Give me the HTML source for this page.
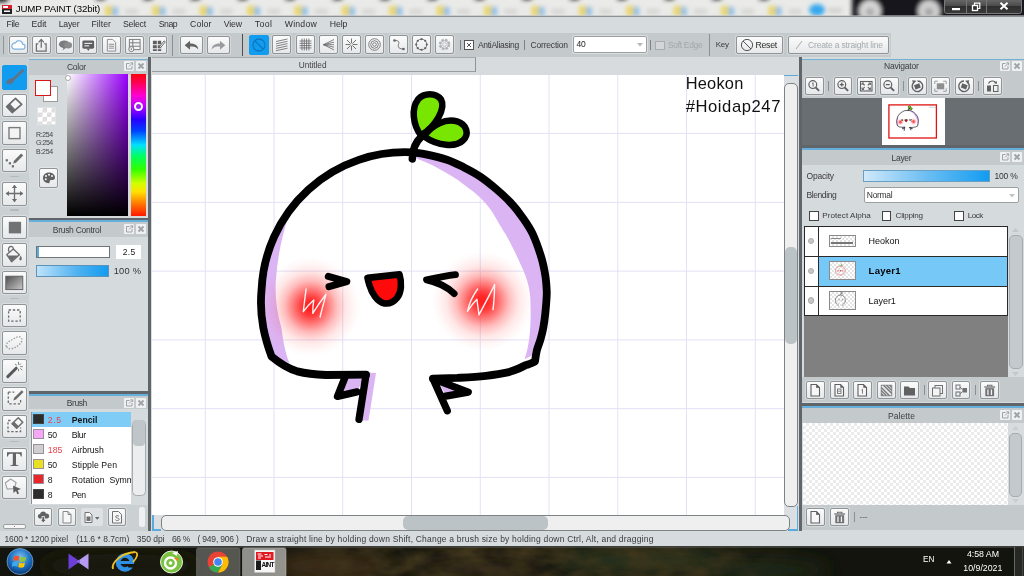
<!DOCTYPE html>
<html>
<head>
<meta charset="utf-8">
<title>JUMP PAINT</title>
<style>
*{box-sizing:border-box;margin:0;padding:0}
html,body{width:1024px;height:576px;overflow:hidden;background:#d6dbde;font-family:"Liberation Sans",sans-serif;font-size:9px;color:#3a3a3a}
#root{position:absolute;left:0;top:0;width:1024px;height:576px;overflow:hidden;will-change:transform}
.a{position:absolute}
.t{position:absolute;white-space:nowrap;line-height:1}
.b{position:absolute;border:1px solid #8f9497;border-radius:2px;background:linear-gradient(#fbfbfb,#e6e8e9);box-shadow:0 0 0 1px rgba(255,255,255,.3)}
.b svg{position:absolute;left:-1px;top:-1px;width:calc(100% + 2px);height:calc(100% + 2px)}
.sel{background:#129cf0;border-color:#129cf0;box-shadow:none}
.cb{position:absolute;width:10px;height:10px;border:1px solid #555;background:#fff}
svg{display:block}
</style>
</head>
<body>
<div id="root">
<div class="a" style="left:0;top:0;width:1024px;height:17px;background:#e9e9e7;overflow:hidden">
<svg class="a" style="left:0;top:0" width="1024" height="17" viewBox="0 0 1024 17">
<defs>
<filter id="bl" x="-5%" y="-50%" width="110%" height="200%"><feGaussianBlur stdDeviation="2.2"/></filter>
<pattern id="ic" x="94" y="0" width="47.400" height="21" patternUnits="userSpaceOnUse">
<rect x="11" y="6" width="9" height="10" fill="#ead568"/>
<rect x="18" y="7" width="6" height="9" fill="#93c0e6"/>
<rect x="31" y="9" width="13" height="5" fill="#d4d4d2"/>
<ellipse cx="6.500" cy="20" rx="5" ry="3.200" fill="#2a2a2a"/>
</pattern>
<linearGradient id="wb" x1="0" y1="0" x2="0" y2="1"><stop offset="0" stop-color="#6a6a6a"/><stop offset=".5" stop-color="#4a4a4a"/><stop offset=".5" stop-color="#2e2e2e"/><stop offset="1" stop-color="#3a3a3a"/></linearGradient>
</defs>
<rect x="0" y="0" width="1024" height="17" fill="#eaeae8"/>
<g filter="url(#bl)">
<ellipse cx="1" cy="-1" rx="8" ry="3.500" fill="#222"/>
<rect x="94" y="-4" width="711" height="21" fill="url(#ic)"/>
<ellipse cx="817" cy="10" rx="8" ry="6" fill="#38a8ee"/>
<rect x="828" y="8" width="14" height="5" fill="#d0d0ce"/>
<rect x="852" y="-6" width="180" height="30" fill="#14161b"/>
<circle cx="870" cy="11" r="11" fill="#d6d6d6"/><circle cx="870" cy="12" r="4" fill="#a8a8a8"/>
<circle cx="929" cy="11" r="11" fill="#d0d0d0"/><circle cx="929" cy="12" r="4" fill="#a0a0a0"/>
</g>
<rect x="0" y="16" width="1024" height="1" fill="#8e9194"/>
<rect x="0" y="15" width="1024" height="1" fill="#b9bcbe" opacity=".6"/>
<rect x="944.5" y="-1" width="77" height="14.5" rx="2" fill="url(#wb)" stroke="#7a7a7a" stroke-width="1"/>
<rect x="966" y="0" width="1" height="13" fill="#777"/><rect x="986" y="0" width="1" height="13" fill="#777"/>
<rect x="952" y="8" width="8" height="2.2" fill="#fff"/>
<rect x="972.5" y="5.500" width="5" height="5" fill="none" stroke="#fff" stroke-width="1.3"/><path d="M974.5 5V3.2h5.3v5.3H978" fill="none" stroke="#fff" stroke-width="1.2"/>
<path d="M1000.5 2.800l7 6.400M1007.500 2.800l-7 6.400" stroke="#fff" stroke-width="2"/>
<rect x="2" y="5" width="10" height="9" fill="#d8202a"/><rect x="2" y="9" width="10" height="5" fill="#222"/><rect x="3" y="6" width="5" height="2" fill="#fff"/><rect x="4" y="10.500" width="6" height="1.500" fill="#fff"/>
</svg>
<div class="t" style="left:15.80px;top:3.89px;font-size:9.7px;color:#000;letter-spacing:-0.131px;">JUMP PAINT (32bit)</div></div>
<div class="a" style="left:0;top:17px;width:1024px;height:16px;background:#d6dbde"><div class="t" style="left:6.50px;top:3.24px;font-size:8.7px;color:#303030;letter-spacing:-0.320px;">File</div><div class="t" style="left:31.50px;top:3.24px;font-size:8.7px;color:#303030;letter-spacing:0.002px;">Edit</div><div class="t" style="left:58.75px;top:3.24px;font-size:8.7px;color:#303030;letter-spacing:-0.225px;">Layer</div><div class="t" style="left:91.50px;top:3.24px;font-size:8.7px;color:#303030;letter-spacing:0.030px;">Filter</div><div class="t" style="left:123.00px;top:3.24px;font-size:8.7px;color:#303030;letter-spacing:-0.215px;">Select</div><div class="t" style="left:158.75px;top:3.24px;font-size:8.7px;color:#303030;letter-spacing:-0.448px;">Snap</div><div class="t" style="left:190.00px;top:3.24px;font-size:8.7px;color:#303030;letter-spacing:0.158px;">Color</div><div class="t" style="left:223.75px;top:3.24px;font-size:8.7px;color:#303030;letter-spacing:-0.129px;">View</div><div class="t" style="left:254.75px;top:3.24px;font-size:8.7px;color:#303030;letter-spacing:0.440px;">Tool</div><div class="t" style="left:284.75px;top:3.24px;font-size:8.7px;color:#303030;letter-spacing:0.219px;">Window</div><div class="t" style="left:329.75px;top:3.24px;font-size:8.7px;color:#303030;letter-spacing:-0.112px;">Help</div></div>
<div class="a" style="left:0;top:33px;width:891px;height:24px;background:#c4c9cc"><div class="a" style="left:3px;top:3px;width:1px;height:18px;background:#8f9598;"></div><div class="b " style="left:9px;top:2.5px;width:18.5px;height:18.5px"><svg viewBox="0 0 19 19"><path d="M5.500 13.500h8.200a2.600 2.600 0 0 0 .3-5.200a3.800 3.800 0 0 0-7.300-1.100a3.200 3.200 0 0 0-1.200 6.300z" fill="#fff" stroke="#7fb2e0" stroke-width="1.200"/></svg></div><div class="b " style="left:32.25px;top:2.5px;width:18.5px;height:18.5px"><svg viewBox="0 0 19 19"><path d="M6.500 8h-2v7.500h10v-7.500h-2" fill="none" stroke="#6d6f71" stroke-width="1.300"/><path d="M9.500 12V4M6.800 6.500l2.700-3l2.700 3" fill="none" stroke="#6d6f71" stroke-width="1.300"/></svg></div><div class="b " style="left:55.5px;top:2.5px;width:18.5px;height:18.5px"><svg viewBox="0 0 19 19"><ellipse cx="8.500" cy="8.500" rx="5.500" ry="4" fill="#7a7c7e"/><ellipse cx="12.500" cy="9.500" rx="4" ry="3.300" fill="#8a8c8e"/><path d="M8 11.500l-1.500 3.500l4-3z" fill="#7a7c7e"/></svg></div><div class="b " style="left:78.75px;top:2.5px;width:18.5px;height:18.5px"><svg viewBox="0 0 19 19"><rect x="3.500" y="4.500" width="12" height="8.500" rx="1.500" fill="#5c5e60"/><path d="M8 13l1.500 2.500l1.500-2.500z" fill="#5c5e60"/><rect x="5.500" y="7" width="8" height="1.200" fill="#e8e8e8"/><rect x="5.500" y="9.500" width="5" height="1.200" fill="#e8e8e8"/></svg></div><div class="b " style="left:102px;top:2.5px;width:18.5px;height:18.5px"><svg viewBox="0 0 19 19"><path d="M5.500 3.500h5.500l3 3v9h-8.500z" fill="#f4f4f4" stroke="#8b8d8f" stroke-width="1"/><path d="M7 8.500h5.500M7 10.500h5.500M7 12.500h5.500" stroke="#8b8d8f" stroke-width="1"/></svg></div><div class="b " style="left:125.25px;top:2.5px;width:18.5px;height:18.5px"><svg viewBox="0 0 19 19"><rect x="4.500" y="3.500" width="11" height="10.500" fill="#f4f4f4" stroke="#7a7c7e" stroke-width="1"/><path d="M4.500 7h11M4.500 10.500h11M8 3.500v10.500" stroke="#7a7c7e" stroke-width="1"/><circle cx="6.500" cy="13.500" r="2.600" fill="#f4f4f4" stroke="#7a7c7e" stroke-width="1"/><circle cx="6.500" cy="13.500" r=".8" fill="#7a7c7e"/></svg></div><div class="b " style="left:148.5px;top:2.5px;width:18.5px;height:18.5px"><svg viewBox="0 0 19 19"><path d="M4 5h4v3.500h-4zM9 5h3.500v3.500h-3.500zM4 9.500h4v3h-4zM9 9.500h3.500v3h-3.500zM4 13.500h4v2h-4zM9 13.500h3.500v2h-3.500z" fill="#5c5e60"/><path d="M11 10.500l4.500-5.500l1.300 1l-4.500 5.500l-1.800.6z" fill="#f4f4f4" stroke="#5c5e60" stroke-width=".9"/></svg></div><div class="a" style="left:172px;top:1.5px;width:1px;height:21px;background:#8a8f92;"></div><div class="b " style="left:179.5px;top:2.5px;width:23px;height:18.5px"><svg viewBox="0 0 23 19"><path d="M4.500 9.500l5.500-4.500v2.800c4.500 0 8 1.500 8.500 6c-1.800-2.500-4.500-3-8.500-3v3.200z" fill="#606264"/></svg></div><div class="b " style="left:207px;top:2.5px;width:23px;height:18.5px"><svg viewBox="0 0 23 19"><path d="M18.500 9.500l-5.500-4.500v2.800c-4.500 0-8 1.500-8.500 6c1.800-2.500 4.500-3 8.500-3v3.200z" fill="#9a9c9e"/></svg></div><div class="a" style="left:242px;top:1px;width:1.2px;height:22px;background:#4a4e51;"></div><div class="b sel" style="left:248.75px;top:1.5px;width:20px;height:20px"><svg viewBox="0 0 20 20"><circle cx="10" cy="10" r="6" fill="none" stroke="#0c78c2" stroke-width="1.300"/><path d="M5.800 5.800l8.400 8.400" stroke="#0c78c2" stroke-width="1.300"/></svg></div><div class="b " style="left:272.25px;top:2px;width:19px;height:19px"><svg viewBox="0 0 19 19"><path d="M4 6.500l11.500-2.500M4 8.800l11.500-2.500M4 11.100l11.500-2.500M4 13.400l11.500-2.500M4 15.700l11.500-2.500" stroke="#636567" stroke-width=".8"/></svg></div><div class="b " style="left:295.5px;top:2px;width:19px;height:19px"><svg viewBox="0 0 19 19"><path d="M3.500 6h12M3.500 8.300h12M3.500 10.600h12M3.500 12.900h12M6 3.500v12M8.300 3.500v12M10.600 3.500v12M12.900 3.500v12" stroke="#636567" stroke-width=".8"/></svg></div><div class="b " style="left:318.75px;top:2px;width:19px;height:19px"><svg viewBox="0 0 19 19"><path d="M4.500 9.700l10.500-5.200M4.500 9.700l10.500-2.500M4.500 9.700h10.500M4.500 9.700l10.500 2.500M4.500 9.700l10.500 5.200" stroke="#636567" stroke-width=".8"/></svg></div><div class="b " style="left:342px;top:2px;width:19px;height:19px"><svg viewBox="0 0 19 19"><path d="M9.500 3.500v12M3.500 9.500h12M5 5l9 9M14 5l-9 9" stroke="#636567" stroke-width=".9"/><circle cx="9.500" cy="9.500" r="1.300" fill="#f4f4f4"/></svg></div><div class="b " style="left:365.25px;top:2px;width:19px;height:19px"><svg viewBox="0 0 19 19"><circle cx="9.500" cy="9.500" r="5.800" fill="none" stroke="#636567" stroke-width=".8"/><circle cx="9.500" cy="9.500" r="3.800" fill="none" stroke="#636567" stroke-width=".8"/><circle cx="9.500" cy="9.500" r="1.800" fill="none" stroke="#636567" stroke-width=".8"/></svg></div><div class="b " style="left:388.5px;top:2px;width:19px;height:19px"><svg viewBox="0 0 19 19"><path d="M5.500 5.500c4 0 5 1 4 4s1 4.500 5 4.500" fill="none" stroke="#636567" stroke-width=".9"/><circle cx="5.500" cy="5.500" r="1.300" fill="#636567"/><circle cx="14.500" cy="14" r="1.300" fill="#636567"/></svg></div><div class="b " style="left:411.75px;top:2px;width:19px;height:19px"><svg viewBox="0 0 19 19"><circle cx="9.500" cy="9.500" r="5.300" fill="none" stroke="#636567" stroke-width=".9"/><g fill="#636567"><circle cx="9.500" cy="4.200" r="1.100"/><circle cx="9.500" cy="14.800" r="1.100"/><circle cx="4.200" cy="9.500" r="1.100"/><circle cx="14.800" cy="9.500" r="1.100"/><circle cx="5.800" cy="5.800" r="1.100"/><circle cx="13.200" cy="5.800" r="1.100"/><circle cx="5.800" cy="13.200" r="1.100"/><circle cx="13.200" cy="13.200" r="1.100"/></g></svg></div><div class="b " style="left:435px;top:2px;width:19px;height:19px"><svg viewBox="0 0 19 19"><circle cx="9.500" cy="9.500" r="4.600" fill="none" stroke="#b0b3b5" stroke-width="2.200" stroke-dasharray="2.400 1.210"/><circle cx="9.500" cy="9.500" r="3.800" fill="none" stroke="#b0b3b5" stroke-width=".9"/><circle cx="9.500" cy="9.500" r="1.900" fill="none" stroke="#b0b3b5" stroke-width=".8"/></svg></div><div class="a" style="left:459.5px;top:7px;width:1px;height:10px;background:#7d8387;"></div><div class="cb" style="left:464px;top:7px"><svg viewBox="0 0 8 8" width="8" height="8"><path d="M2 2l4 4M6 2l-4 4" stroke="#555" stroke-width="1"/></svg></div><div class="t" style="left:478.00px;top:7.80px;font-size:8.5px;color:#3a3a3a;letter-spacing:-0.297px;">AntiAliasing</div><div class="a" style="left:524px;top:7px;width:1px;height:10px;background:#7d8387;"></div><div class="t" style="left:530.50px;top:7.80px;font-size:8.5px;color:#3a3a3a;letter-spacing:-0.180px;">Correction</div><div class="a" style="left:572.5px;top:3px;width:74px;height:16.500px;background:#fff;border:1px solid #9a9fa2;border-radius:2px;box-shadow:0 0 0 1px rgba(255,255,255,.4)"></div><div class="t" style="left:576.50px;top:7.30px;font-size:8.5px;color:#222;letter-spacing:-0.303px;">40</div><svg class="a" style="left:637px;top:10px" width="6" height="4" viewBox="0 0 6 4"><path d="M0 0h6l-3 3.500z" fill="#b5b9bc"/></svg><div class="a" style="left:649.5px;top:7px;width:1px;height:10px;background:#7d8387;"></div><div class="cb" style="left:655px;top:7.500px;width:9.500px;height:9.500px;border-color:#a8acaf;background:#d2d6d9"></div><div class="t" style="left:668.00px;top:7.80px;font-size:8.5px;color:#a3a8ab;letter-spacing:-0.333px;">Soft Edge</div><div class="a" style="left:708.5px;top:1px;width:1px;height:22px;background:#8a8f92;"></div><div class="t" style="left:715.75px;top:8.23px;font-size:8px;color:#3a3a3a;letter-spacing:-0.214px;">Key</div><div class="b " style="left:735.5px;top:2.5px;width:47px;height:18px"><svg viewBox="0 0 47 18"><circle cx="11" cy="9" r="5.600" fill="none" stroke="#555" stroke-width="1"/><path d="M7 5l8 8" stroke="#555" stroke-width="1"/></svg></div><div class="t" style="left:755.50px;top:7.85px;font-size:8.8px;color:#2a2a2a;letter-spacing:-0.331px;">Reset</div><div class="b " style="left:787.5px;top:2.5px;width:101.5px;height:18px"><svg viewBox="0 0 101.5 18"><path d="M8 13l6-8" stroke="#a5aaad" stroke-width="1"/></svg></div><div class="t" style="left:808.00px;top:7.80px;font-size:8.5px;color:#a5aaad;letter-spacing:-0.160px;">Create a straight line</div></div>
<div class="a" style="left:0;top:57px;width:29px;height:474px;background:#cbd0d3"><div class="b sel" style="left:2px;top:8px;width:25.2px;height:25px"><svg viewBox="0 0 25.2 25"><path d="M20.800 5.500L10.500 15" stroke="#5f7486" stroke-width="2.800" stroke-linecap="round"/><ellipse cx="8.300" cy="16.200" rx="4.200" ry="2.500" transform="rotate(-28 8.300 16.200)" fill="#5f7486"/></svg></div><div class="b " style="left:2px;top:36.5px;width:25.2px;height:23.5px"><svg viewBox="0 0 25.2 23.5"><path d="M13.500 4.300L19.700 10.400L10.200 18.500L4.700 12.600Z" fill="#f6f6f6" stroke="#6a6c6e" stroke-width="1.700" stroke-linejoin="round"/><path d="M4.700 12.600L7.600 9.900L13.300 15.900L10.200 18.500Z" fill="#6a6c6e" stroke="#6a6c6e" stroke-width="1" stroke-linejoin="round"/></svg></div><div class="b " style="left:2px;top:64px;width:25.2px;height:23.5px"><svg viewBox="0 0 25.2 23.5"><rect x="7" y="6.600" width="11" height="11" fill="#f4f4f4" stroke="#7a7c7e" stroke-width="1.400"/></svg></div><div class="b " style="left:2px;top:91.5px;width:25.2px;height:23.5px"><svg viewBox="0 0 25.2 23.5"><path d="M19.200 4.600l2 2l-7.200 7.200l-2.800.8l.8-2.800z" fill="#6a6c6e"/><g fill="#6a6c6e"><rect x="3.700" y="10.200" width="2.200" height="2.200"/><rect x="6.800" y="13.200" width="2.200" height="2.200"/><rect x="9.800" y="16.200" width="2.200" height="2.200"/></g></svg></div><div class="b " style="left:2px;top:125px;width:25.2px;height:23.5px"><svg viewBox="0 0 25.2 23.5"><path d="M12.500 3.500v16M4.500 11.500h16" stroke="#6a6c6e" stroke-width="1.300"/><path d="M12.500 2.700l2.600 3.300h-5.200zM12.500 20.300l2.600-3.300h-5.200zM3.700 11.500l3.300-2.600v5.200zM21.300 11.500l-3.300-2.600v5.200z" fill="#6a6c6e"/></svg></div><div class="b " style="left:2px;top:158.5px;width:25.2px;height:23.5px"><svg viewBox="0 0 25.2 23.5"><rect x="6.800" y="5.800" width="12.300" height="11.600" fill="#707274"/></svg></div><div class="b " style="left:2px;top:186px;width:25.2px;height:23.5px"><svg viewBox="0 0 25.2 23.5"><path d="M4.700 11.700L11.300 6.100L17.400 11.700L9.700 18.900Z" fill="#f4f4f4" stroke="#6a6c6e" stroke-width="1.300" stroke-linejoin="round"/><path d="M5.500 12.600L16.200 12.600L9.700 18.600Z" fill="#6a6c6e"/><path d="M7.200 8.800c-1.500-2.500-.5-5 1.400-5.300s3.200 1.500 2.900 3.400" fill="none" stroke="#6a6c6e" stroke-width="1.300"/><path d="M18.600 12.500c1.300 2.200 1.600 3.800.7 4.600s-2.200 0-1.900-1.600z" fill="#6a6c6e"/></svg></div><div class="b " style="left:2px;top:213.5px;width:25.2px;height:23.5px"><svg viewBox="0 0 25.2 23.5"><defs><linearGradient id="gg" x1="0" y1="0" x2="1" y2=".9"><stop offset="0" stop-color="#4f4f4f"/><stop offset="1" stop-color="#c4c4c4"/></linearGradient></defs><rect x="3.800" y="5.200" width="17" height="13.400" fill="url(#gg)" stroke="#5a5c5e" stroke-width=".9"/></svg></div><div class="b " style="left:2px;top:246.5px;width:25.2px;height:23.5px"><svg viewBox="0 0 25.2 23.5"><rect x="6.600" y="6" width="11.600" height="11.200" fill="none" stroke="#6a6c6e" stroke-width="1.300" stroke-dasharray="2.400 1.800"/></svg></div><div class="b " style="left:2px;top:274px;width:25.2px;height:23.5px"><svg viewBox="0 0 25.2 23.5"><path d="M4.500 15.500c-1.500-2.500 2-5 5-6.500s6.500-4.500 9-2.800s1.500 5-1 7.200s-4.500 3.500-7.500 4.200s-4.500-.5-5.500-2.100z" fill="none" stroke="#9a9c9e" stroke-width="1.400" stroke-dasharray="1.400 1.500"/></svg></div><div class="b " style="left:2px;top:302px;width:25.2px;height:23.5px"><svg viewBox="0 0 25.2 23.5"><path d="M5.800 17.600L14.200 9.200" stroke="#58595b" stroke-width="3" stroke-linecap="round"/><path d="M16.500 2.800v3M16.500 9.800v2.500M20.800 7.600h-2.600M18.800 4.500l-1.300 1.500M20.300 11l-2-1.500M13 5l1.800 1.300" stroke="#7f8183" stroke-width="1"/></svg></div><div class="b " style="left:2px;top:330px;width:25.2px;height:23.5px"><svg viewBox="0 0 25.2 23.5"><path d="M6.300 5.200h6M6.300 5.200v11.600h12.300v-4.500" fill="none" stroke="#6a6c6e" stroke-width="1.300" stroke-dasharray="2.400 1.800"/><path d="M19.800 3.200l1.800 1.800l-7.600 7.600l-2.700.9l.9-2.700z" fill="#6a6c6e"/></svg></div><div class="b " style="left:2px;top:357.5px;width:25.2px;height:23.5px"><svg viewBox="0 0 25.2 23.5"><path d="M8.500 5.500h-2.500v11.100h12.600v-4" fill="none" stroke="#6a6c6e" stroke-width="1.300" stroke-dasharray="2.400 1.800"/><path d="M16.300 2.700L20.800 7.200L14.700 13.300L10 8.800Z" fill="#f6f6f6" stroke="#6a6c6e" stroke-width="1.500" stroke-linejoin="round"/><path d="M10 8.800L12 6.900L16.600 11.400L14.700 13.300Z" fill="#6a6c6e" stroke="#6a6c6e" stroke-width=".8" stroke-linejoin="round"/></svg></div><div class="b " style="left:2px;top:390.5px;width:25.2px;height:23.5px"><svg viewBox="0 0 25.2 23.5"><path d="M5 4.200h14.800v4.200h-1c-.4-2-1-2.700-2.800-2.700h-2v10c0 1.200.6 1.500 2.400 1.600v.8h-8v-.8c1.800-.1 2.400-.4 2.400-1.600v-10h-2c-1.800 0-2.400.7-2.800 2.700h-1z" fill="#626466"/></svg></div><div class="b " style="left:2px;top:418.5px;width:25.2px;height:23.5px"><svg viewBox="0 0 25.2 23.5"><path d="M8.600 3.100L14.100 6.400L12.400 12.500L5.200 13.100L3.300 6.900Z" fill="#f6f6f6" stroke="#a0a2a4" stroke-width="1.200" stroke-linejoin="round"/><path d="M11 9.800L19 13l-3.300 1.200l1.300 3.300l-1.700.7l-1.300-3.300l-2.500 2z" fill="#5c5e60"/></svg></div><div class="a" style="left:10px;top:118.5px;width:9px;height:1.5px;background:#b4b9bc;border-radius:1px"></div><div class="a" style="left:10px;top:152.0px;width:9px;height:1.5px;background:#b4b9bc;border-radius:1px"></div><div class="a" style="left:10px;top:240.5px;width:9px;height:1.5px;background:#b4b9bc;border-radius:1px"></div><div class="a" style="left:10px;top:383.5px;width:9px;height:1.5px;background:#b4b9bc;border-radius:1px"></div><div class="a" style="left:2.500px;top:467.20000000000005px;width:23px;height:4.800px;background:#f6f6f6;border:1px solid #9a9fa2;border-radius:2px"></div><div class="a" style="left:13.5px;top:469px;width:1.2px;height:1.2px;background:#888;"></div></div>
<div class="a" style="left:0;top:0;width:0;height:0"><div class="a" style="left:29px;top:57px;width:119px;height:474px;background:#d5dadd;"></div><div class="a" style="left:29px;top:58.8px;width:119px;height:1.5px;background:#72b2d9;"></div><div class="a" style="left:29px;top:60.3px;width:119px;height:14.5px;background:#c4c9cc;"></div><div class="t" style="left:67.00px;top:62.50px;font-size:8.5px;color:#3a3e41;letter-spacing:-0.292px;">Color</div><svg class="a" style="left:124px;top:61.199999999999996px" width="22" height="10" viewBox="0 0 22 10"><rect x="0" y="0" width="10" height="10" rx="1" fill="#eef0f1"/><rect x="12" y="0" width="10" height="10" rx="1" fill="#eef0f1"/><path d="M5.500 2.500h-3v5.500h5.500v-3" fill="none" stroke="#9ea3a6" stroke-width="1"/><path d="M5 5.500l3.500-3.500M6.300 1.800h2.400v2.400" fill="none" stroke="#9ea3a6" stroke-width="1"/><path d="M14.500 2.500l5 5M19.500 2.500l-5 5" stroke="#9ea3a6" stroke-width="1.800"/></svg><div class="a" style="left:66.800px;top:74.400px;width:61.200px;height:141.400px;background:linear-gradient(to bottom,rgba(0,0,0,0),#000),linear-gradient(to right,#fff,#9a00ff)"></div>
<div class="a" style="left:131px;top:74.400px;width:15px;height:141.400px;background:linear-gradient(to bottom,#ff0010 0%,#ff0050 6%,#ff00d0 15%,#c000ff 22%,#2800ff 32%,#0040ff 40%,#00e0ff 50%,#00ff60 58%,#30ff00 67%,#d0ff00 77%,#ffe000 83%,#ff7000 92%,#ff1800 100%)"></div>
<div class="a" style="left:134px;top:101.800px;width:9px;height:9px;border-radius:50%;border:2px solid #fff;background:#a020f0"></div>
<div class="a" style="left:64.800px;top:74.500px;width:6px;height:6px;border-radius:50%;background:#fff;border:.5px solid #aaa"></div>
<div class="a" style="left:42.500px;top:86px;width:15.500px;height:15.500px;background:#fefefe;border:1px solid #9a9a9a"></div>
<div class="a" style="left:35px;top:79.500px;width:16px;height:16px;background:#fefefe;border:1.500px solid #d81818"></div>
<div class="a" style="left:37px;top:107px;width:18.500px;height:18px;background:#fff;border:1px solid #e3e3e3;background-image:linear-gradient(45deg,#dcdcdc 25%,transparent 25%,transparent 75%,#dcdcdc 75%),linear-gradient(45deg,#dcdcdc 25%,transparent 25%,transparent 75%,#dcdcdc 75%);background-size:9px 9px;background-position:0 0,4.500px 4.500px"></div>
<div class="t" style="left:36.00px;top:131.07px;font-size:7px;color:#444;letter-spacing:-0.373px;">R:254</div><div class="t" style="left:36.00px;top:139.37px;font-size:7px;color:#444;letter-spacing:-0.460px;">G:254</div><div class="t" style="left:36.00px;top:147.67px;font-size:7px;color:#444;letter-spacing:-0.287px;">B:254</div><div class="b " style="left:38.5px;top:168px;width:19.5px;height:19.5px"><svg viewBox="0 0 19.5 19.5"><path d="M10 4.500c-3.500 0-6 2.400-6 5.500s2.500 5.200 5.500 5.200c1.200 0 1.500-.8 1.200-1.600s.3-1.700 1.500-1.700h1.500c1.500 0 2.300-1 2.300-2.400c0-2.800-2.600-5-6-5z" fill="#5f6163"/><g fill="#f4f4f4"><circle cx="7" cy="8" r="1"/><circle cx="10" cy="6.800" r="1"/><circle cx="13" cy="8" r="1"/><circle cx="6.800" cy="11.300" r="1"/></g></svg></div><div class="a" style="left:29px;top:217.5px;width:119px;height:2.5px;background:#5f6569;"></div><div class="a" style="left:29px;top:220.0px;width:119px;height:2px;background:#66afdc;"></div><div class="a" style="left:29px;top:222.0px;width:119px;height:14.5px;background:#c4c9cc;"></div><div class="t" style="left:52.75px;top:225.80px;font-size:8.5px;color:#3a3e41;letter-spacing:-0.278px;">Brush Control</div><svg class="a" style="left:124px;top:224.0px" width="22" height="10" viewBox="0 0 22 10"><rect x="0" y="0" width="10" height="10" rx="1" fill="#eef0f1"/><rect x="12" y="0" width="10" height="10" rx="1" fill="#eef0f1"/><path d="M5.500 2.500h-3v5.500h5.500v-3" fill="none" stroke="#9ea3a6" stroke-width="1"/><path d="M5 5.500l3.500-3.500M6.300 1.800h2.400v2.400" fill="none" stroke="#9ea3a6" stroke-width="1"/><path d="M14.500 2.500l5 5M19.500 2.500l-5 5" stroke="#9ea3a6" stroke-width="1.800"/></svg><div class="a" style="left:36px;top:246.250px;width:74px;height:11.500px;background:#fff;border:1px solid #6f7477"></div>
<div class="a" style="left:37px;top:247.250px;width:1.500px;height:9.500px;background:#5aaade"></div>
<div class="a" style="left:116px;top:245px;width:24.500px;height:14px;background:#fff"></div>
<div class="a" style="left:36px;top:265px;width:72.800px;height:12px;background:linear-gradient(to right,#bfe3f9,#52b3f0 55%,#129cf0);border:1px solid #5d93b8"></div>
<div class="t" style="left:122.75px;top:248.05px;font-size:8.5px;color:#222;letter-spacing:0.273px;">2.5</div><div class="t" style="left:113.75px;top:266.83px;font-size:9.3px;color:#333;letter-spacing:0.196px;">100 %</div><div class="a" style="left:29px;top:391px;width:119px;height:2.5px;background:#5f6569;"></div><div class="a" style="left:29px;top:393.5px;width:119px;height:2px;background:#66afdc;"></div><div class="a" style="left:29px;top:395.5px;width:119px;height:13.5px;background:#c4c9cc;"></div><div class="t" style="left:66.75px;top:399.30px;font-size:8.5px;color:#3a3e41;letter-spacing:-0.412px;">Brush</div><svg class="a" style="left:124px;top:397.5px" width="22" height="10" viewBox="0 0 22 10"><rect x="0" y="0" width="10" height="10" rx="1" fill="#eef0f1"/><rect x="12" y="0" width="10" height="10" rx="1" fill="#eef0f1"/><path d="M5.500 2.500h-3v5.500h5.500v-3" fill="none" stroke="#9ea3a6" stroke-width="1"/><path d="M5 5.500l3.500-3.500M6.300 1.800h2.400v2.400" fill="none" stroke="#9ea3a6" stroke-width="1"/><path d="M14.500 2.500l5 5M19.500 2.500l-5 5" stroke="#9ea3a6" stroke-width="1.800"/></svg><div class="a" style="left:31px;top:412.250px;width:100px;height:92.200px;background:#fff;overflow:hidden"><div class="a" style="left:0;top:0;width:1px;height:93px;background:#8a8f92;z-index:2"></div><div class="a" style="left:0;top:0px;width:100px;height:15px;background:#7fcdf7"></div><div class="a" style="left:0;top:14.8px;width:100px;height:1px;background:#a3a8ab"></div><div class="a" style="left:2px;top:2.2px;width:10.700px;height:10px;background:#2c2c2c;border:1px solid #444"></div><div class="t" style="left:16.75px;top:3.54px;font-size:8.7px;color:#e8444c;letter-spacing:0.662px;">2.5</div><div class="t" style="left:40.75px;top:3.54px;font-size:8.7px;color:#111;letter-spacing:0.022px;font-weight:bold;">Pencil</div><div class="a" style="left:0;top:15px;width:100px;height:15px;background:#fff"></div><div class="a" style="left:0;top:29.8px;width:100px;height:1px;background:#a3a8ab"></div><div class="a" style="left:2px;top:17.2px;width:10.700px;height:10px;background:#f5a6f5;border:1px solid #9a8f9a"></div><div class="t" style="left:16.75px;top:18.54px;font-size:8.7px;color:#1a1a1a;letter-spacing:-0.218px;">50</div><div class="t" style="left:40.75px;top:18.54px;font-size:8.7px;color:#111;letter-spacing:-0.378px;">Blur</div><div class="a" style="left:0;top:30px;width:100px;height:15px;background:#fff"></div><div class="a" style="left:0;top:44.8px;width:100px;height:1px;background:#a3a8ab"></div><div class="a" style="left:2px;top:32.2px;width:10.700px;height:10px;background:#cfcfcf;border:1px solid #9a8f9a"></div><div class="t" style="left:16.75px;top:33.54px;font-size:8.7px;color:#e8444c;letter-spacing:0.094px;">185</div><div class="t" style="left:40.75px;top:33.54px;font-size:8.7px;color:#111;letter-spacing:-0.053px;">Airbrush</div><div class="a" style="left:0;top:45px;width:100px;height:15px;background:#fff"></div><div class="a" style="left:0;top:59.8px;width:100px;height:1px;background:#a3a8ab"></div><div class="a" style="left:2px;top:47.2px;width:10.700px;height:10px;background:#e8e020;border:1px solid #9a8f9a"></div><div class="t" style="left:16.75px;top:48.54px;font-size:8.7px;color:#1a1a1a;letter-spacing:-0.218px;">50</div><div class="t" style="left:40.75px;top:48.54px;font-size:8.7px;color:#111;letter-spacing:0.081px;">Stipple Pen</div><div class="a" style="left:0;top:60px;width:100px;height:15px;background:#fff"></div><div class="a" style="left:0;top:74.8px;width:100px;height:1px;background:#a3a8ab"></div><div class="a" style="left:2px;top:62.2px;width:10.700px;height:10px;background:#e82828;border:1px solid #9a8f9a"></div><div class="t" style="left:16.75px;top:63.54px;font-size:8.7px;color:#1a1a1a;letter-spacing:-0.489px;">8</div><div class="t" style="left:40.75px;top:63.54px;font-size:8.7px;color:#111;letter-spacing:0.059px;">Rotation</div><div class="t" style="left:78.40px;top:63.54px;font-size:8.7px;color:#111;letter-spacing:0.000px;">Symm</div><div class="a" style="left:0;top:75px;width:100px;height:15px;background:#fff"></div><div class="a" style="left:0;top:89.8px;width:100px;height:1px;background:#a3a8ab"></div><div class="a" style="left:2px;top:77.2px;width:10.700px;height:10px;background:#2c2c2c;border:1px solid #444"></div><div class="t" style="left:16.75px;top:78.54px;font-size:8.7px;color:#1a1a1a;letter-spacing:-0.489px;">8</div><div class="t" style="left:40.75px;top:78.54px;font-size:8.7px;color:#111;letter-spacing:-0.532px;">Pen</div><div class="a" style="left:0;top:90px;width:100px;height:15px;background:#fff"></div><div class="a" style="left:0;top:104.8px;width:100px;height:1px;background:#a3a8ab"></div><div class="a" style="left:2px;top:92.2px;width:10.700px;height:10px;background:#2c2c2c;border:1px solid #444"></div></div><div class="a" style="left:29px;top:504.5px;width:119px;height:26.5px;background:#cbd0d3;"></div><div class="a" style="left:131px;top:412px;width:17px;height:92.500px;background:#d5dadd"></div>
<div class="a" style="left:132px;top:419.500px;width:13.500px;height:76.500px;background:#ebedee;border:1px solid #a6abae;border-radius:4.500px"></div>
<div class="a" style="left:132.500px;top:420px;width:12.500px;height:25.500px;background:#bfc5c9;border-radius:4px"></div>
<div class="b " style="left:33.75px;top:508px;width:18.4px;height:18px"><svg viewBox="0 0 18.4 18"><path d="M5.500 10.500a2.300 2.300 0 0 1 .5-4.500a3.200 3.200 0 0 1 6.200-.3a2.400 2.400 0 0 1 1 4.800z" fill="#5f6163"/><path d="M8 8.500h2.600v3h1.800l-3.100 3.300l-3.100-3.300h1.800z" fill="#5f6163" stroke="#f4f4f4" stroke-width=".8"/></svg></div><div class="b " style="left:57.5px;top:508px;width:18px;height:18px"><svg viewBox="0 0 18 18"><path d="M5 3.500h5l3 3v8.500h-8z" fill="#f7f7f7" stroke="#85888a" stroke-width="1"/><path d="M10 3.500v3h3" fill="none" stroke="#85888a" stroke-width="1"/></svg></div><div class="a" style="left:80.9px;top:508px;width:22.5px;height:18px;background:#dde1e3;border-radius:2px"><svg viewBox="0 0 22.5 18" width="22.5" height="18"><path d="M4 4.500h4.500l2.500 2.500v7.500h-7z" fill="#f7f7f7" stroke="#6f7173" stroke-width="1"/><rect x="5.500" y="8.500" width="4" height="4.500" fill="#6f7173"/><path d="M14 9h4.500l-2.250 2.800z" fill="#666"/></svg></div><div class="b " style="left:107.5px;top:508px;width:18px;height:18px"><svg viewBox="0 0 18 18"><path d="M4.500 3.500h6l3 3v8.500h-9z" fill="#f7f7f7" stroke="#6f7173" stroke-width="1"/><path d="M11 8.300c-.5-.9-3.400-1-3.400.5s3.600.8 3.600 2.500s-3.200 1.600-3.800.4" fill="none" stroke="#6f7173" stroke-width="1"/></svg></div><div class="a" style="left:138.500px;top:507px;width:6.500px;height:20px;background:#eef0f1;border-radius:2.500px"></div></div>
<div class="a" style="left:148px;top:57px;width:3.4px;height:474px;background:#5f6569;"></div><div class="a" style="left:151.4px;top:57px;width:0.6px;height:474px;background:#d9dcde;"></div>
<div class="a" style="left:0;top:0;width:0;height:0"><div class="a" style="left:152px;top:57px;width:646px;height:18px;background:#d7dbde;"></div><div class="a" style="left:152px;top:56.7px;width:323.8px;height:15px;background:#d6dbde;border-right:1.200px solid #8e9396;border-bottom:1.100px solid #989da0;border-top:1px solid #a4a9ac"></div><div class="t" style="left:298.75px;top:60.67px;font-size:8.3px;color:#444;letter-spacing:-0.052px;">Untitled</div><div class="a" style="left:152px;top:74.600px;width:631.500px;height:440.400px;background:#fff;overflow:hidden"><svg class="a" style="left:0;top:0" width="632" height="441" viewBox="152 74.600 632 441"><rect x="204.75" y="74" width="1" height="442" fill="#e1e1f6"/><rect x="273.5" y="74" width="1" height="442" fill="#e1e1f6"/><rect x="342.25" y="74" width="1" height="442" fill="#e1e1f6"/><rect x="411.0" y="74" width="1" height="442" fill="#e1e1f6"/><rect x="479.75" y="74" width="1" height="442" fill="#e1e1f6"/><rect x="548.5" y="74" width="1" height="442" fill="#e1e1f6"/><rect x="617.25" y="74" width="1" height="442" fill="#e1e1f6"/><rect x="686.0" y="74" width="1" height="442" fill="#e1e1f6"/><rect x="754.75" y="74" width="1" height="442" fill="#e1e1f6"/><rect x="152" y="132.5" width="632" height="1" fill="#e1e1f6"/><rect x="152" y="201.5" width="632" height="1" fill="#e1e1f6"/><rect x="152" y="270.25" width="632" height="1" fill="#e1e1f6"/><rect x="152" y="339.0" width="632" height="1" fill="#e1e1f6"/><rect x="152" y="407.75" width="632" height="1" fill="#e1e1f6"/><rect x="152" y="476.5" width="632" height="1" fill="#e1e1f6"/><g id="dr">
<defs>
<radialGradient id="bl1"><stop offset="0" stop-color="#ff1a1a" stop-opacity=".98"/><stop offset=".1" stop-color="#ff1c1c" stop-opacity=".95"/><stop offset=".2" stop-color="#ff2020" stop-opacity=".85"/><stop offset=".35" stop-color="#ff2828" stop-opacity=".61"/><stop offset=".52" stop-color="#ff3434" stop-opacity=".33"/><stop offset=".7" stop-color="#ff4444" stop-opacity=".135"/><stop offset=".88" stop-color="#ff5050" stop-opacity=".04"/><stop offset="1" stop-color="#ff6060" stop-opacity="0"/></radialGradient>
</defs>
<!-- purple shading -->
<path d="M414.0 153.0C415.6 153.1 417.9 152.4 423.4 153.5C428.9 154.6 440.1 157.1 446.9 159.3C453.7 161.6 458.4 164.2 464.0 167.0C469.6 169.8 475.1 172.7 480.4 176.3C485.7 179.9 491.0 184.2 496.0 188.5C501.0 192.8 506.1 197.3 510.5 202.1C514.9 206.8 518.8 211.7 522.5 217.0C526.2 222.3 529.6 227.0 532.8 233.7C535.9 240.4 539.3 250.3 541.4 257.2C543.5 264.1 544.4 269.5 545.3 275.0C546.2 280.5 546.5 286.1 546.7 290.0C546.9 293.9 546.7 294.9 546.5 298.7C546.3 302.5 545.8 308.2 545.3 313.0C544.8 317.8 544.1 323.0 543.3 327.3C542.5 331.6 541.6 335.2 540.5 339.0C539.4 342.8 537.4 348.3 536.8 350.2L534 354L524.600 358.800C531 340 531 320 530.400 298.700C530 290 528 282 525.400 275C520 262 512 245 505.500 233.700C500 225 495 216 491.400 210.300C484 200 476 193 470.300 189.200C462 182 454 177 446.900 172.800C437 167 427 162 417.600 158.700Z" fill="#dbb4f4"/>
<path d="M289 214A143.500 143.500 0 0 0 261.600 289C260.300 310 263 335 271.500 356L289.500 362.500C285 352 283 340 281.500 327.300C276 310 274.500 290 276.300 275C278 255 282 235 289 214Z" fill="#dbb4f4"/>
<path d="M345 377L337.500 396L357 391L364 378ZM366 372L376 372.500L368.500 420L359 420Z" fill="#dbb4f4"/>
<path d="M438 381L466 391.500L446 395Z" fill="#dbb4f4"/>
<!-- blush -->
<ellipse cx="310.500" cy="306.300" rx="50" ry="50" fill="url(#bl1)"/>
<ellipse cx="482.500" cy="300.800" rx="51" ry="50" fill="url(#bl1)"/>
<path d="M306.100 288.600C305 297 304 305 303.300 311.300C307 306 311 302 313.800 299.500C313 304 312.700 309 312.800 313C317 306 321.500 299.500 326 293.800C324 302 321.500 310 320.100 316.600" fill="none" stroke="#fff2f2" stroke-width="1.400" stroke-linejoin="round" stroke-linecap="round"/>
<path d="M477.600 288.600C473 295 469 303 467.500 311C470 307 474 302 476.900 298.900C477.500 304 478.500 310 479 314.400C484 305 490 294 494.600 284.200C494.500 293 494 302 493 309.200" fill="none" stroke="#fff2f2" stroke-width="1.400" stroke-linejoin="round" stroke-linecap="round"/>
<g id="drl">
<!-- body -->
<path d="M412.300 152A143.500 143.500 0 0 0 261.600 289C260.300 302 261 315 263.300 327.300C265 336 267.500 345 271.500 356C280 363 288 368 297.300 371C307 373.500 316 374.300 326 374.600L366 374.300" fill="none" stroke="#000" stroke-width="7.800" stroke-linecap="round" stroke-linejoin="round"/>
<path d="M412.3 152.0C414.1 152.2 417.6 152.3 423.4 153.5C429.2 154.7 440.1 157.1 446.9 159.3C453.7 161.6 458.4 164.2 464.0 167.0C469.6 169.8 475.1 172.7 480.4 176.3C485.7 179.9 491.0 184.2 496.0 188.5C501.0 192.8 506.1 197.3 510.5 202.1C514.9 206.8 518.8 211.7 522.5 217.0C526.2 222.3 529.6 227.0 532.8 233.7C535.9 240.4 539.3 250.3 541.4 257.2C543.5 264.1 544.4 269.5 545.3 275.0C546.2 280.5 546.5 286.1 546.7 290.0C546.9 293.9 546.7 294.9 546.5 298.7C546.3 302.5 545.8 308.2 545.3 313.0C544.8 317.8 544.1 323.0 543.3 327.3C542.5 331.6 541.6 335.2 540.5 339.0C539.4 342.8 537.7 346.5 536.8 350.2C535.9 353.9 535.3 359.2 535.0 361.0C531 363 529 364 526 364.600C520 368 514 370 508.900 371.700C501 373.500 494 374.500 486 375.400C476 376.500 466 377 457.300 377.500L433 378.300" fill="none" stroke="#000" stroke-width="7.800" stroke-linecap="round" stroke-linejoin="round"/>
<!-- feet -->
<path d="M345 377L337.500 396L357 391.500M366 374.600L359 419" fill="none" stroke="#000" stroke-width="7.300" stroke-linecap="round" stroke-linejoin="round"/>
<path d="M433 378.300L447.300 410.400M436 379.500L468.200 391.800L444.500 396" fill="none" stroke="#000" stroke-width="7.300" stroke-linecap="round" stroke-linejoin="round"/>
<!-- eyes -->
<path d="M328.300 276L346.800 281.300L329 286.300" fill="none" stroke="#000" stroke-width="7" stroke-linecap="round" stroke-linejoin="round"/>
<path d="M455.500 274.300C446 275.500 436 277.500 426.500 279.500C438 282 448 287 454.200 293.300" fill="none" stroke="#000" stroke-width="6.800" stroke-linecap="round" stroke-linejoin="round"/>
</g><g>
<!-- mouth -->
<path d="M367.500 277.500L399.500 274C402 282 401.500 292 397 297.500C393 302.500 388 303.500 384.500 303C377 301.500 371.500 292 369.500 285C368.500 282 368 280 367.500 277.500Z" fill="#ff0a0a" stroke="#000" stroke-width="6.600" stroke-linejoin="round"/>
<!-- sprout -->
<path d="M421 135C413 125 411 108 418 99C424 92 436 92 441 99C446 108 436 126 421 135Z" fill="#78e600" stroke="#000" stroke-width="6.500" stroke-linejoin="round"/>
<path d="M424 136C432 124 446 118 457 121C467 124 469.500 134 463 140C456 147 438 146 424 136Z" fill="#78e600" stroke="#000" stroke-width="6.500" stroke-linejoin="round"/>
<path d="M412.300 158.500C412.500 150 415 142 421.500 136" fill="none" stroke="#000" stroke-width="7.500" stroke-linecap="round"/>
</g>
</g></svg></div><div class="t" style="left:685.70px;top:75.32px;font-size:16.4px;color:#111;letter-spacing:0.213px;">Heokon</div><div class="t" style="left:685.70px;top:99.45px;font-size:16.6px;color:#111;letter-spacing:0.575px;">#Hoidap247</div><div class="a" style="left:783.5px;top:74.5px;width:14.5px;height:456px;background:#dcdfe1;"></div><div class="a" style="left:783.5px;top:74.5px;width:14.5px;height:1.5px;background:#5aaade;"></div><div class="a" style="left:796.5px;top:506px;width:1.5px;height:24.5px;background:#5aaade;"></div><div class="a" style="left:788px;top:529px;width:10px;height:1.5px;background:#5aaade;"></div><div class="a" style="left:783.500px;top:83px;width:14.500px;height:424px;background:#efefef;border:1px solid #7d8285;border-radius:5px"></div><div class="a" style="left:784.500px;top:246.500px;width:12.500px;height:97.500px;background:#bcc3c7;border-radius:5px"></div><div class="a" style="left:152px;top:515px;width:636px;height:15.5px;background:#dcdfe1;"></div><div class="a" style="left:152px;top:515px;width:1.5px;height:15.5px;background:#5aaade;"></div><div class="a" style="left:152px;top:529px;width:9px;height:1.5px;background:#5aaade;"></div><div class="a" style="left:160.500px;top:515px;width:629px;height:15.500px;background:#efefef;border:1px solid #7d8285;border-radius:5px"></div><div class="a" style="left:402.500px;top:516px;width:145.500px;height:13.500px;background:#bcc3c7;border-radius:5px"></div></div>
<div class="a" style="left:798px;top:57px;width:1.2px;height:474px;background:#d9dcde;"></div><div class="a" style="left:799.2px;top:57px;width:2.8px;height:474px;background:#5f6569;"></div>
<div class="a" style="left:0;top:0;width:0;height:0"><div class="a" style="left:802px;top:57px;width:222px;height:474px;background:#d5dadd;"></div><div class="a" style="left:802px;top:58.6px;width:222px;height:1.5px;background:#72b2d9;"></div><div class="a" style="left:802px;top:60.1px;width:222px;height:14.5px;background:#c4c9cc;"></div><div class="t" style="left:884.00px;top:62.40px;font-size:8.5px;color:#3a3e41;letter-spacing:-0.198px;">Navigator</div><svg class="a" style="left:1000px;top:61.0px" width="22" height="10" viewBox="0 0 22 10"><rect x="0" y="0" width="10" height="10" rx="1" fill="#eef0f1"/><rect x="12" y="0" width="10" height="10" rx="1" fill="#eef0f1"/><path d="M5.500 2.500h-3v5.500h5.500v-3" fill="none" stroke="#9ea3a6" stroke-width="1"/><path d="M5 5.500l3.500-3.500M6.300 1.800h2.400v2.400" fill="none" stroke="#9ea3a6" stroke-width="1"/><path d="M14.500 2.500l5 5M19.500 2.500l-5 5" stroke="#9ea3a6" stroke-width="1.800"/></svg><div class="a" style="left:802px;top:73.5px;width:222px;height:24px;background:#c4c9cc;"></div><div class="b " style="left:805px;top:76.6px;width:18.5px;height:18.2px"><svg viewBox="0 0 18.5 18.2"><circle cx="7.800" cy="7.600" r="3.900" fill="#f4f4f4" stroke="#5f6163" stroke-width="1.200"/><path d="M10.700 10.500l3.400 3.400" stroke="#5f6163" stroke-width="1.800"/><path d="M7.100 6.500l1-.8v3.900" fill="none" stroke="#5f6163" stroke-width=".9"/></svg></div><div class="b " style="left:833.9px;top:76.6px;width:18.5px;height:18.2px"><svg viewBox="0 0 18.5 18.2"><circle cx="7.800" cy="7.600" r="3.900" fill="#f4f4f4" stroke="#5f6163" stroke-width="1.200"/><path d="M10.700 10.500l3.400 3.400" stroke="#5f6163" stroke-width="1.800"/><path d="M5.800 7.600h4M7.800 5.600v4" stroke="#5f6163" stroke-width="1.300"/></svg></div><div class="b " style="left:857px;top:76.6px;width:18.5px;height:18.2px"><svg viewBox="0 0 18.5 18.2"><rect x="3.500" y="4.500" width="11.500" height="9.500" fill="none" stroke="#5f6163" stroke-width="1.100"/><path d="M5.500 6.500l2.200 1.800M13 6.500l-2.200 1.800M5.500 12l2.200-1.800M13 12l-2.200-1.800" stroke="#5f6163" stroke-width="1.100"/><path d="M5 8v-2h2M13.500 8v-2h-2M5 10.500v2h2M13.500 10.500v2h-2" fill="none" stroke="#5f6163" stroke-width=".9"/></svg></div><div class="b " style="left:880px;top:76.6px;width:18.5px;height:18.2px"><svg viewBox="0 0 18.5 18.2"><circle cx="7.800" cy="7.600" r="3.900" fill="#f4f4f4" stroke="#5f6163" stroke-width="1.200"/><path d="M10.700 10.500l3.400 3.400" stroke="#5f6163" stroke-width="1.800"/><path d="M5.800 7.600h4" stroke="#5f6163" stroke-width="1.300"/></svg></div><div class="b " style="left:908px;top:76.6px;width:18.5px;height:18.2px"><svg viewBox="0 0 18.5 18.2"><path d="M6 5.300A5.300 5.300 0 1 0 9.500 4" fill="none" stroke="#5f6163" stroke-width="1.400"/><rect x="6.600" y="7.200" width="5.600" height="4.400" transform="rotate(-20 9.400 9.400)" fill="#5f6163"/><path d="M4.200 3.200l4.300.6l-3.300 3.200z" fill="#5f6163"/></svg></div><div class="b " style="left:931px;top:76.6px;width:18.5px;height:18.2px"><svg viewBox="0 0 18.5 18.2"><rect x="5.800" y="6.300" width="7.400" height="6" fill="#8c8e90"/><path d="M3.800 7v-2.800h3M15.200 7v-2.800h-3M3.800 11.500v2.800h3M15.200 11.500v2.800h-3" fill="none" stroke="#9a9c9e" stroke-width="1"/></svg></div><div class="b " style="left:955px;top:76.6px;width:18.5px;height:18.2px"><svg viewBox="0 0 18.5 18.2"><path d="M12.500 5.300A5.300 5.300 0 1 1 9 4" fill="none" stroke="#5f6163" stroke-width="1.400"/><rect x="6.400" y="7.200" width="5.600" height="4.400" transform="rotate(20 9.200 9.400)" fill="#5f6163"/><path d="M14.300 3.200l-4.300.6l3.300 3.200z" fill="#5f6163"/></svg></div><div class="b " style="left:983px;top:76.6px;width:18.5px;height:18.2px"><svg viewBox="0 0 18.5 18.2"><rect x="4" y="8.500" width="4" height="6" fill="#5f6163"/><rect x="10.500" y="8.500" width="4.500" height="6" fill="none" stroke="#5f6163" stroke-width="1"/><path d="M5.500 6.500c1-3 6-3.500 7.500-.5" fill="none" stroke="#5f6163" stroke-width="1.100"/><path d="M14 4l-.3 3l-2.800-1z" fill="#5f6163"/></svg></div><div class="a" style="left:828px;top:81px;width:1px;height:10px;background:#8a9094;"></div><div class="a" style="left:903px;top:81px;width:1px;height:10px;background:#8a9094;"></div><div class="a" style="left:978px;top:81px;width:1px;height:10px;background:#8a9094;"></div><div class="a" style="left:802px;top:97.5px;width:222px;height:50px;background:#696e72;"></div><svg class="a" style="left:881.700px;top:97.800px" width="63" height="47.400" viewBox="881.700 97.800 63 47.400"><rect x="881" y="97" width="65" height="49" fill="#fff"/><use href="#dr" transform="translate(876.390 98.400) scale(0.07637)"/><rect x="928.800" y="105.500" width="4.400" height=".6" fill="#ccc"/><rect x="928.800" y="107.200" width="6.500" height=".6" fill="#ccc"/><rect x="888.600" y="104.700" width="47.500" height="33.100" fill="none" stroke="#e01414" stroke-width="1.300"/></svg><div class="a" style="left:802px;top:145px;width:222px;height:2.5px;background:#5f6569;"></div><div class="a" style="left:802px;top:147.5px;width:222px;height:2px;background:#66afdc;"></div><div class="a" style="left:802px;top:149.5px;width:222px;height:15.5px;background:#c4c9cc;"></div><div class="t" style="left:891.50px;top:153.60px;font-size:8.5px;color:#3a3e41;letter-spacing:-0.281px;">Layer</div><svg class="a" style="left:1000px;top:151.5px" width="22" height="10" viewBox="0 0 22 10"><rect x="0" y="0" width="10" height="10" rx="1" fill="#eef0f1"/><rect x="12" y="0" width="10" height="10" rx="1" fill="#eef0f1"/><path d="M5.500 2.500h-3v5.500h5.500v-3" fill="none" stroke="#9ea3a6" stroke-width="1"/><path d="M5 5.500l3.500-3.500M6.300 1.800h2.400v2.400" fill="none" stroke="#9ea3a6" stroke-width="1"/><path d="M14.500 2.500l5 5M19.500 2.500l-5 5" stroke="#9ea3a6" stroke-width="1.800"/></svg><div class="t" style="left:806.50px;top:172.10px;font-size:8.5px;color:#3a3a3a;letter-spacing:-0.203px;">Opacity</div><div class="a" style="left:862.500px;top:169.500px;width:127.300px;height:12.300px;background:linear-gradient(to right,#cfe9fa,#6cbef3 50%,#129cf0);border:1px solid #6a9fc4"></div><div class="t" style="left:994.60px;top:172.10px;font-size:8.5px;color:#333;letter-spacing:-0.223px;">100 %</div><div class="t" style="left:806.50px;top:191.10px;font-size:8.5px;color:#3a3a3a;letter-spacing:-0.411px;">Blending</div><div class="a" style="left:864.300px;top:186.500px;width:154.700px;height:16.300px;background:#fff;border:1px solid #9a9fa2;border-radius:2px"></div><div class="t" style="left:866.80px;top:190.60px;font-size:8.5px;color:#333;letter-spacing:-0.308px;">Normal</div><svg class="a" style="left:1009px;top:193.500px" width="6" height="4" viewBox="0 0 6 4"><path d="M0 0h6l-3 3.500z" fill="#c0c4c7"/></svg><div class="cb" style="left:809px;top:211px;width:9.500px;height:9.500px;border-color:#444"></div><div class="t" style="left:822.30px;top:212.14px;font-size:8.1px;color:#3a3a3a;letter-spacing:0.033px;">Protect Alpha</div><div class="cb" style="left:881.7px;top:211px;width:9.500px;height:9.500px;border-color:#444"></div><div class="t" style="left:895.60px;top:212.14px;font-size:8.1px;color:#3a3a3a;letter-spacing:-0.249px;">Clipping</div><div class="cb" style="left:954px;top:211px;width:9.500px;height:9.500px;border-color:#444"></div><div class="t" style="left:967.70px;top:212.14px;font-size:8.1px;color:#3a3a3a;letter-spacing:-0.517px;">Lock</div><div class="a" style="left:803.5px;top:225.5px;width:204.5px;height:151.5px;background:#808080;"></div><div class="a" style="left:803.5px;top:225.9px;width:204.5px;height:90.3px;background:#fff;border:1px solid #2a2a2a"></div><div class="a" style="left:818.5px;top:256.5px;width:188.5px;height:29.8px;background:#76c8f6;"></div><div class="a" style="left:803.5px;top:256px;width:204.5px;height:1px;background:#2a2a2a;"></div><div class="a" style="left:803.5px;top:286px;width:204.5px;height:1px;background:#2a2a2a;"></div><div class="a" style="left:818px;top:226px;width:1px;height:90px;background:#2a2a2a;"></div><div class="a" style="left:807.800px;top:237.8px;width:6.400px;height:6.400px;border-radius:50%;background:#c8c8c8;border:.6px solid #aaa"></div><div class="a" style="left:807.800px;top:267.8px;width:6.400px;height:6.400px;border-radius:50%;background:#c8c8c8;border:.6px solid #aaa"></div><div class="a" style="left:807.800px;top:297.3px;width:6.400px;height:6.400px;border-radius:50%;background:#c8c8c8;border:.6px solid #aaa"></div><div class="a" style="left:828.900px;top:235.100px;width:27px;height:12.100px;background-color:#fff;border:1px solid #8a8a8a;background-image:linear-gradient(45deg,#e4e4e4 25%,transparent 25%,transparent 75%,#e4e4e4 75%),linear-gradient(45deg,#e4e4e4 25%,transparent 25%,transparent 75%,#e4e4e4 75%);background-size:4px 4px;background-position:0 0,2px 2px"></div><div class="a" style="left:830.5px;top:237.6px;width:10px;height:1.6px;background:#8a8a8a;"></div><div class="a" style="left:830.5px;top:242px;width:22.5px;height:1.9px;background:#777;"></div><div class="a" style="left:828.900px;top:261.200px;width:27px;height:19.100px;background-color:#fff;border:1px solid #8a8a8a;background-image:linear-gradient(45deg,#e4e4e4 25%,transparent 25%,transparent 75%,#e4e4e4 75%),linear-gradient(45deg,#e4e4e4 25%,transparent 25%,transparent 75%,#e4e4e4 75%);background-size:4px 4px;background-position:0 0,2px 2px"></div><div class="a" style="left:828.900px;top:291.200px;width:27px;height:19.300px;background-color:#fff;border:1px solid #8a8a8a;background-image:linear-gradient(45deg,#e4e4e4 25%,transparent 25%,transparent 75%,#e4e4e4 75%),linear-gradient(45deg,#e4e4e4 25%,transparent 25%,transparent 75%,#e4e4e4 75%);background-size:4px 4px;background-position:0 0,2px 2px"></div><svg class="a" style="left:829px;top:261.200px" width="27" height="19" viewBox="829 261.200 27 19"><g opacity=".8"><ellipse cx="840.400" cy="270.800" rx="4.900" ry="4.500" fill="none" stroke="#e06a6a" stroke-width=".8"/><path d="M837.500 270.600l.5 1l.5-1l.5 1M841.800 270.600l.5 1l.5-1l.5 1" fill="none" stroke="#d03030" stroke-width=".6"/><path d="M839.800 270.300h1.300v1.200h-1.300z" fill="#c02020"/><path d="M840.500 266l.9-1.600l.9 1.300z" fill="#4a0" stroke="#3a8a00" stroke-width=".4"/></g></svg><svg class="a" style="left:829px;top:291.200px" width="27" height="19" viewBox="829 291.200 27 19"><g opacity=".85"><path d="M837.500 304.300c-3.300-.8-2.900-9 2.900-9s6.200 8.200 2.900 9" fill="none" stroke="#555" stroke-width=".8"/><path d="M838.200 304.500l.2 1.800M842.600 304.500l.4 1.700M838.600 299.700l.9.300l-.9.300M842.800 299.600l-1 .4l1 .5" fill="none" stroke="#444" stroke-width=".6"/><path d="M840.600 295.300c0-1 .5-1.500 1-1.800" fill="none" stroke="#444" stroke-width=".7"/><ellipse cx="841.800" cy="293.200" rx="1.100" ry=".8" fill="none" stroke="#444" stroke-width=".5"/></g></svg><div class="t" style="left:868.60px;top:236.78px;font-size:9px;color:#111;letter-spacing:-0.040px;">Heokon</div><div class="t" style="left:868.60px;top:266.26px;font-size:9.5px;color:#000;letter-spacing:0.266px;font-weight:bold;">Layer1</div><div class="t" style="left:868.60px;top:297.18px;font-size:9px;color:#111;letter-spacing:-0.058px;">Layer1</div><div class="a" style="left:1009px;top:234.500px;width:13.500px;height:134px;background:#c3c9cc;border:1px solid #a6abae;border-radius:5px"></div><svg class="a" style="left:1012px;top:228px" width="7" height="4" viewBox="0 0 7 4"><path d="M0 4h7l-3.500-4z" fill="#c3c8cb"/></svg><svg class="a" style="left:1012px;top:371.500px" width="7" height="4" viewBox="0 0 7 4"><path d="M0 0h7l-3.500 4z" fill="#c3c8cb"/></svg><div class="a" style="left:802px;top:376.5px;width:222px;height:26px;background:#c4c9cc;"></div><div class="a" style="left:802px;top:402.3px;width:222px;height:1px;background:#d5dadd;"></div><div class="b " style="left:806.3px;top:380.5px;width:18.8px;height:18.5px"><svg viewBox="0 0 18.8 18.5"><path d="M5 3.500h5.500l3 3v8.500h-8.500z" fill="#f7f7f7" stroke="#5e6062" stroke-width="1.100"/><path d="M10.300 3.500l3.200 3.200h-3.200z" fill="#5e6062"/><path d="M10.500 3.500v3h3" fill="none" stroke="#6f7173" stroke-width="1"/></svg></div><div class="b " style="left:830px;top:380.5px;width:18.8px;height:18.5px"><svg viewBox="0 0 18.8 18.5"><path d="M5 3.500h5.500l3 3v8.500h-8.500z" fill="#f7f7f7" stroke="#5e6062" stroke-width="1.100"/><path d="M10.300 3.500l3.200 3.200h-3.200z" fill="#5e6062"/><rect x="7.500" y="8" width="3.500" height="4.500" fill="none" stroke="#6f7173" stroke-width=".9"/><path d="M7.500 10.200h3.500" stroke="#6f7173" stroke-width=".8"/></svg></div><div class="b " style="left:853.3px;top:380.5px;width:18.8px;height:18.5px"><svg viewBox="0 0 18.8 18.5"><path d="M5 3.500h5.500l3 3v8.500h-8.500z" fill="#f7f7f7" stroke="#5e6062" stroke-width="1.100"/><path d="M10.300 3.500l3.200 3.200h-3.200z" fill="#5e6062"/><path d="M8.500 9l1-.8v4.500" fill="none" stroke="#6f7173" stroke-width=".9"/></svg></div><div class="b " style="left:876.8px;top:380.5px;width:18.8px;height:18.5px"><svg viewBox="0 0 18.8 18.5"><rect x="4.200" y="4.200" width="10.600" height="10.600" fill="#e8e8e8" stroke="#77797b" stroke-width=".8"/><path d="M4.200 6.500l8.300 8.300M4.200 9.500l5.300 5.300M4.200 12.500l2.300 2.300M6.500 4.200l8.300 8.300M9.500 4.200l5.300 5.300M12.500 4.200l2.300 2.300" stroke="#77797b" stroke-width="1.300"/></svg></div><div class="b " style="left:900px;top:380.5px;width:18.8px;height:18.5px"><svg viewBox="0 0 18.8 18.5"><path d="M4 5.500h4.500l1.500 1.500h5v7.500h-11z" fill="#5f6163"/></svg></div><div class="b " style="left:928.2px;top:380.5px;width:18.8px;height:18.5px"><svg viewBox="0 0 18.8 18.5"><rect x="7" y="4.500" width="7.500" height="8" fill="#f4f4f4" stroke="#6f7173" stroke-width="1"/><rect x="4.500" y="7" width="7.500" height="8" fill="#f4f4f4" stroke="#6f7173" stroke-width="1"/></svg></div><div class="b " style="left:951.5px;top:380.5px;width:18.8px;height:18.5px"><svg viewBox="0 0 18.8 18.5"><rect x="4" y="4" width="4" height="4" fill="none" stroke="#6f7173" stroke-width="1"/><rect x="4" y="11" width="4" height="4" fill="none" stroke="#6f7173" stroke-width="1"/><rect x="10.500" y="7" width="4.500" height="4.500" fill="#6f7173"/><path d="M8 6l2.500 2.500M8 13l2.500-2.500" stroke="#6f7173" stroke-width=".9"/></svg></div><div class="b " style="left:980px;top:380.5px;width:18.8px;height:18.5px"><svg viewBox="0 0 18.8 18.5"><rect x="5.300" y="7.200" width="8.800" height="8" fill="#6f7173"/><rect x="7.300" y="8.500" width="1.300" height="5.500" fill="#f2f2f2"/><rect x="10.800" y="8.500" width="1.300" height="5.500" fill="#f2f2f2"/><path d="M4.300 6h10.800" stroke="#6f7173" stroke-width="1.300"/><path d="M7.500 5.500v-1.300h4.400v1.300" fill="none" stroke="#6f7173" stroke-width="1.100"/></svg></div><div class="a" style="left:923.5px;top:385px;width:1px;height:10px;background:#8a9094;"></div><div class="a" style="left:974.5px;top:385px;width:1px;height:10px;background:#8a9094;"></div><div class="a" style="left:802px;top:403px;width:222px;height:2.5px;background:#5f6569;"></div><div class="a" style="left:802px;top:405.5px;width:222px;height:2px;background:#66afdc;"></div><div class="a" style="left:802px;top:407.5px;width:222px;height:15.5px;background:#c4c9cc;"></div><div class="t" style="left:888.00px;top:411.50px;font-size:8.5px;color:#3a3e41;letter-spacing:0.083px;">Palette</div><svg class="a" style="left:1000px;top:409.5px" width="22" height="10" viewBox="0 0 22 10"><rect x="0" y="0" width="10" height="10" rx="1" fill="#eef0f1"/><rect x="12" y="0" width="10" height="10" rx="1" fill="#eef0f1"/><path d="M5.500 2.500h-3v5.500h5.500v-3" fill="none" stroke="#9ea3a6" stroke-width="1"/><path d="M5 5.500l3.500-3.500M6.300 1.800h2.400v2.400" fill="none" stroke="#9ea3a6" stroke-width="1"/><path d="M14.500 2.500l5 5M19.500 2.500l-5 5" stroke="#9ea3a6" stroke-width="1.800"/></svg><div class="a" style="left:803px;top:423px;width:204.500px;height:82px;background-color:#fff;background-image:linear-gradient(45deg,#ebebeb 25%,transparent 25%,transparent 75%,#ebebeb 75%),linear-gradient(45deg,#ebebeb 25%,transparent 25%,transparent 75%,#ebebeb 75%);background-size:6px 6px;background-position:0 0,3px 3px"></div><div class="a" style="left:1007.5px;top:423px;width:16.5px;height:82px;background:#d8dcdf;"></div><div class="a" style="left:1008.500px;top:432.500px;width:13.500px;height:64px;background:#c3c9cc;border:1px solid #a6abae;border-radius:5px"></div><svg class="a" style="left:1012px;top:426px" width="7" height="4" viewBox="0 0 7 4"><path d="M0 4h7l-3.500-4z" fill="#c9ced1"/></svg><svg class="a" style="left:1012px;top:499px" width="7" height="4" viewBox="0 0 7 4"><path d="M0 0h7l-3.500 4z" fill="#c9ced1"/></svg><div class="a" style="left:802px;top:505px;width:222px;height:25px;background:#c4c9cc;"></div><div class="b " style="left:806.3px;top:507.75px;width:19px;height:18.5px"><svg viewBox="0 0 19 18.5"><path d="M5 3.500h5.500l3 3v8.500h-8.500z" fill="#f7f7f7" stroke="#5e6062" stroke-width="1.100"/><path d="M10.300 3.500l3.200 3.200h-3.200z" fill="#5e6062"/><path d="M10.500 3.500v3h3" fill="none" stroke="#6f7173" stroke-width="1"/></svg></div><div class="b " style="left:829.5px;top:507.75px;width:19px;height:18.5px"><svg viewBox="0 0 19 18.5"><rect x="5.300" y="7.200" width="8.800" height="8" fill="#6f7173"/><rect x="7.300" y="8.500" width="1.300" height="5.500" fill="#f2f2f2"/><rect x="10.800" y="8.500" width="1.300" height="5.500" fill="#f2f2f2"/><path d="M4.300 6h10.800" stroke="#6f7173" stroke-width="1.300"/><path d="M7.500 5.500v-1.300h4.400v1.300" fill="none" stroke="#6f7173" stroke-width="1.100"/></svg></div><div class="a" style="left:853.5px;top:512px;width:1px;height:10px;background:#8a9094;"></div><div class="t" style="left:859.50px;top:512.80px;font-size:8.5px;color:#666;letter-spacing:-0.197px;">---</div><div class="a" style="left:802px;top:530px;width:222px;height:1px;background:#d6dbde;"></div></div>
<div class="a" style="left:0;top:531px;width:1024px;height:15px;background:#d6dbde"><div class="t" style="left:4.50px;top:3.80px;font-size:8.5px;color:#3a3a3a;letter-spacing:-0.133px;">1600 * 1200 pixel</div><div class="t" style="left:76.25px;top:3.80px;font-size:8.5px;color:#3a3a3a;letter-spacing:0.018px;">(11.6 * 8.7cm)</div><div class="t" style="left:136.75px;top:3.80px;font-size:8.5px;color:#3a3a3a;letter-spacing:-0.021px;">350 dpi</div><div class="t" style="left:172.00px;top:3.80px;font-size:8.5px;color:#3a3a3a;letter-spacing:-0.393px;">66 %</div><div class="t" style="left:197.50px;top:3.80px;font-size:8.5px;color:#3a3a3a;letter-spacing:-0.193px;">( 949, 906 )</div><div class="t" style="left:246.25px;top:3.80px;font-size:8.5px;color:#3a3a3a;letter-spacing:0.202px;">Draw a straight line by holding down Shift, Change a brush size by holding down Ctrl, Alt, and dragging</div></div>
<div class="a" style="left:0;top:546px;width:1024px;height:30px;background:#14150e;overflow:hidden"><svg class="a" style="left:0;top:0" width="1024" height="30" viewBox="0 0 1024 30">
<defs><filter id="tb1" x="-10%" y="-100%" width="120%" height="300%"><feGaussianBlur stdDeviation="9"/></filter>
<radialGradient id="orb" cx=".5" cy=".35" r=".7"><stop offset="0" stop-color="#7fc4f5"/><stop offset=".55" stop-color="#1c6fc0"/><stop offset="1" stop-color="#0a2d63"/></radialGradient>
</defs>
<rect width="1024" height="30" fill="#13140d"/>
<g filter="url(#tb1)">
<ellipse cx="330" cy="20" rx="60" ry="14" fill="#3a2a14"/>
<ellipse cx="480" cy="22" rx="70" ry="12" fill="#2c2412"/>
<ellipse cx="640" cy="14" rx="90" ry="14" fill="#26301a"/>
<ellipse cx="760" cy="24" rx="70" ry="12" fill="#1c2616"/>
<ellipse cx="120" cy="20" rx="80" ry="12" fill="#1c1a10"/>
</g>
<filter id="nz" x="0" y="0" width="100%" height="100%" color-interpolation-filters="sRGB"><feTurbulence type="fractalNoise" baseFrequency="0.035 0.07" numOctaves="3" seed="7"/><feColorMatrix type="matrix" values="0 0 0 0 0.25  0 0 0 0 0.21  0 0 0 0 0.11  1.7 0 0 0 -0.4"/></filter>
<linearGradient id="nzg" x1="0" y1="0" x2="1" y2="0"><stop offset="0" stop-color="#fff" stop-opacity="0"/><stop offset=".12" stop-color="#fff" stop-opacity="1"/><stop offset=".8" stop-color="#fff" stop-opacity="1"/><stop offset="1" stop-color="#fff" stop-opacity="0"/></linearGradient>
<mask id="nzm"><rect x="280" y="0" width="520" height="30" fill="url(#nzg)"/></mask>
<g mask="url(#nzm)"><rect x="280" y="0" width="520" height="30" filter="url(#nz)"/></g>
<rect width="1024" height="1" fill="#3c3d3a"/>
<rect y="1" width="1024" height="1" fill="#5a5b58" opacity=".5"/>
<!-- active task buttons -->
<rect x="196.500" y="2" width="43.500" height="29" rx="2" fill="#8d8d8a" opacity=".55" stroke="#c8c8c8" stroke-opacity=".5"/>
<rect x="242.500" y="2" width="43.500" height="29" rx="2" fill="#b9b9b6" opacity=".75" stroke="#e0e0e0" stroke-opacity=".6"/>
<!-- start orb -->
<circle cx="20" cy="15.500" r="13" fill="url(#orb)" stroke="#9cc6ea" stroke-opacity=".6" stroke-width="1"/>
<path d="M14 10.500c2-1 4-1 5.500 0l-1 4.500c-1.500-1-3.500-1-5.500 0z" fill="#f0552a"/>
<path d="M20.500 10.800c2 1 4 1 5.800 0l-1 4.500c-2 1-4 1-5.800 0z" fill="#8cc63e"/>
<path d="M12.700 16.200c2-1 4-1 5.500 0l-1 4.500c-1.500-1-3.500-1-5.500 0z" fill="#3fa9f0"/>
<path d="M19.200 16.500c2 1 4 1 5.800 0l-1 4.500c-2 1-4 1-5.800 0z" fill="#fbc400"/>
<!-- VS -->
<path d="M68.500 7.500L80 15.500L68.500 23.500Z" fill="#6d3fd6"/><path d="M88.500 7.500L77 15.500L88.500 23.500Z" fill="#b79bf2"/><path d="M77 15.500L80 13.400V17.600Z" fill="#8a62e0"/>
<!-- IE -->
<circle cx="125" cy="16.500" r="7" fill="none" stroke="#2f8fe6" stroke-width="4.600"/>
<rect x="120" y="15" width="14" height="3" fill="#2f8fe6"/><path d="M126 18h9.500v3.500h-7z" fill="#14150e"/><rect x="126" y="17.300" width="9" height="4" fill="#14150e" opacity=".0"/>
<path d="M113 23c-2-6 8-16 22-17" fill="none" stroke="#f0c020" stroke-width="1.800"/><path d="M135 6c4 1 2 6-2 10" fill="none" stroke="#f0c020" stroke-width="1.800"/>
<!-- coccoc -->
<circle cx="171.500" cy="16" r="11" fill="#7cc242"/><circle cx="171.500" cy="16" r="11" fill="none" stroke="#e8f4da" stroke-width="1"/>
<circle cx="170.500" cy="17" r="5.500" fill="none" stroke="#fff" stroke-width="2.300"/><circle cx="170.500" cy="17" r="1.800" fill="#fff"/><path d="M172 7l6-2l-1 5z" fill="#fff"/><path d="M174 12l5 0l-2 3z" fill="#f08020"/>
<!-- chrome -->
<circle cx="218" cy="16" r="10.500" fill="#e94335"/>
<path d="M218 16l-9.100 5.250a10.500 10.500 0 0 0 9.100 5.250l4.500-7.900z" fill="#34a853"/>
<path d="M218 16l4.500 2.600l-4.500 7.900a10.500 10.500 0 0 0 9.100-15.750h-9.100z" fill="#fbbc05"/>
<circle cx="218" cy="16" r="4.800" fill="#fff"/><circle cx="218" cy="16" r="3.800" fill="#4285f4"/>
<!-- jump paint -->
<rect x="254.500" y="4" width="20.500" height="22.500" fill="#f6f6f6" stroke="#bbb" stroke-width=".5"/>
<rect x="256" y="6" width="17.500" height="8" fill="#e01822"/><path d="M257.500 8h4M258 10h5M258 12h3M264.500 8.500h3M265 11h4M270 8v4" stroke="#fff" stroke-width="1"/>
<rect x="256" y="14.500" width="5" height="9.500" fill="#1a1a1a"/>
<!-- tray -->
<path d="M949 17.500l2.500-3.500l2.500 3.500z" fill="#fff" transform="translate(-2.500 0)"/>
<rect x="1014" y="1" width="10" height="29" fill="#2c2d2a" opacity=".8"/><rect x="1014" y="1" width="1" height="29" fill="#777875" opacity=".8"/><rect x="1022" y="1" width="1" height="29" fill="#555653" opacity=".7"/>
</svg><div class="t" style="left:261.50px;top:16.00px;font-size:6.5px;color:#111;letter-spacing:-0.761px;font-weight:bold;">AINT</div><div class="t" style="left:923.00px;top:10.06px;font-size:8.2px;color:#fff;letter-spacing:-0.061px;">EN</div><div class="t" style="left:967.00px;top:3.85px;font-size:8.8px;color:#fff;letter-spacing:-0.044px;">4:58 AM</div><div class="t" style="left:963.30px;top:17.55px;font-size:8.8px;color:#fff;letter-spacing:-0.006px;">10/9/2021</div></div>
</div>
</body>
</html>
